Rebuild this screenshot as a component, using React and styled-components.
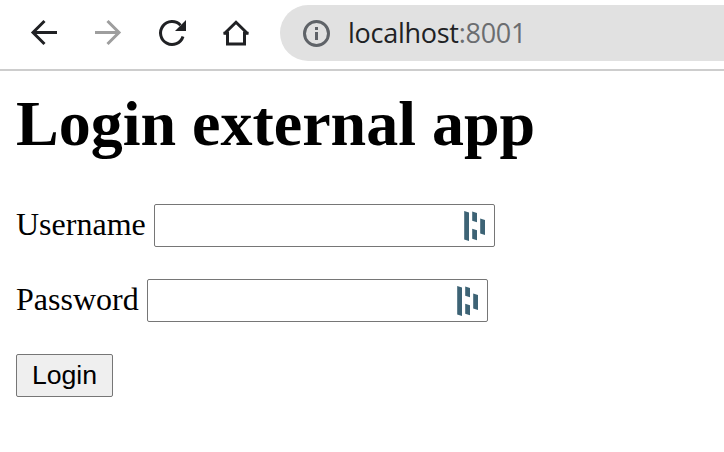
import React from "react";
import styled, { createGlobalStyle } from "styled-components";

const Global = createGlobalStyle`
  * { box-sizing: border-box; }
  body { margin: 0; background: #fff; overflow: hidden; }
`;
const Toolbar = styled.header`
  display: flex;
  height: 71px;
  padding: 5px 0 0 28px;
  border-bottom: 2px solid #cdcdcd;
`;
const NavButton = styled.button`
  width: 32px;
  height: 56px;
  margin-right: 32px;
  padding: 0;
  border: 0;
  background: none;
  display: flex;
  align-items: center;
  justify-content: center;
  color: ${(p) => (p.$muted ? "#9e9e9e" : "#202124")};
`;
const Address = styled.div`
  flex: 1;
  height: 56px;
  margin-left: -4px;
  padding-left: 20px;
  border-radius: 28px 0 0 28px;
  background: #e1e1e1;
  display: flex;
  align-items: center;
  color: #5f6368;
  font: 27px "Open Sans", sans-serif;
`;
const Url = styled.span`
  margin-left: 16px;
  padding-bottom: 2px;
  white-space: nowrap;
  letter-spacing: -0.27px;
  color: #202124;
`;
const Port = styled.span`
  color: #6b6d70;
`;
const Page = styled.main`
  padding: 16px;
  font-family: "Liberation Serif", serif;
  color: #000;
`;
const Title = styled.h1`
  margin: 0;
  font-size: 64px;
  line-height: 74px;
  white-space: nowrap;
`;
const Row = styled.div`
  display: flex;
  align-items: center;
  height: 43px;
  margin-top: ${(p) => p.$gap}px;
`;
const Label = styled.label`
  width: ${(p) => p.$width}px;
  padding-bottom: 3px;
  font-size: 32px;
  line-height: 37px;
  white-space: nowrap;
`;
const Field = styled.div`
  width: 341px;
  height: 43px;
  border: 1px solid #767676;
  border-radius: 2px;
  display: flex;
  align-items: center;
  justify-content: flex-end;
  padding-right: 8px;
`;
const Input = styled.input`
  flex: 1;
  min-width: 0;
  border: 0;
  outline: 0;
  background: none;
`;
const Login = styled.button`
  width: 97px;
  height: 43px;
  padding: 0 0 1px;
  border: 1px solid #767676;
  border-radius: 2px;
  background: #efefef;
  color: #000;
  font: 26.67px "Liberation Sans", sans-serif;
`;

const Icon = ({ children }) => (
  <svg width="32" height="32" viewBox="0 0 32 32" fill="none" stroke="currentColor" strokeWidth="3" strokeLinejoin="miter">{children}</svg>
);
const Manager = () => (
  <svg width="22" height="30" viewBox="0 0 22 30" fill="#3d6375">
    <path d="M.2 0L5 1.5V30L.2 28.5zM8.2.5L13 2v9.3L8.2 9.8zM8.2 17.8L13 19.3v9.9l-4.8-1.5zM16.2 7.6L21 9.1V24l-4.8-1.5z" />
  </svg>
);

export default function App() {
  return (
    <>
      <Global />
      <Toolbar>
        <NavButton aria-label="Back">
          <Icon><path d="M29 15.5H5M16.5 4L5 15.5 16.5 27" /></Icon>
        </NavButton>
        <NavButton $muted aria-label="Forward">
          <Icon><path d="M3 15.5h24M15.5 4L27 15.5 15.5 27" /></Icon>
        </NavButton>
        <NavButton aria-label="Reload">
          <Icon>
            <path d="M27 19.5A11.5 11.5 0 1 1 24.5 8.2" />
            <path d="M30 3v11H19z" fill="currentColor" stroke="none" />
          </Icon>
        </NavButton>
        <NavButton aria-label="Home">
          <Icon><path d="M3.5 16.2H7.5V27H24.5V16.2H28.5M4 17L16 5.3 28 17" /></Icon>
        </NavButton>
        <Address>
          <Icon><circle cx="16.5" cy="16.5" r="12" /><path d="M16.5 15v8M16.5 10v3" /></Icon>
          <Url>localhost<Port>:8001</Port></Url>
        </Address>
      </Toolbar>
      <Page>
        <Title>Login external app</Title>
        <Row $gap={43}><Label $width={138}>Username</Label><Field><Input aria-label="Username" /><Manager /></Field></Row>
        <Row $gap={32}><Label $width={131}>Password</Label><Field><Input type="password" aria-label="Password" /><Manager /></Field></Row>
        <Row $gap={32}><Login>Login</Login></Row>
      </Page>
    </>
  );
}
